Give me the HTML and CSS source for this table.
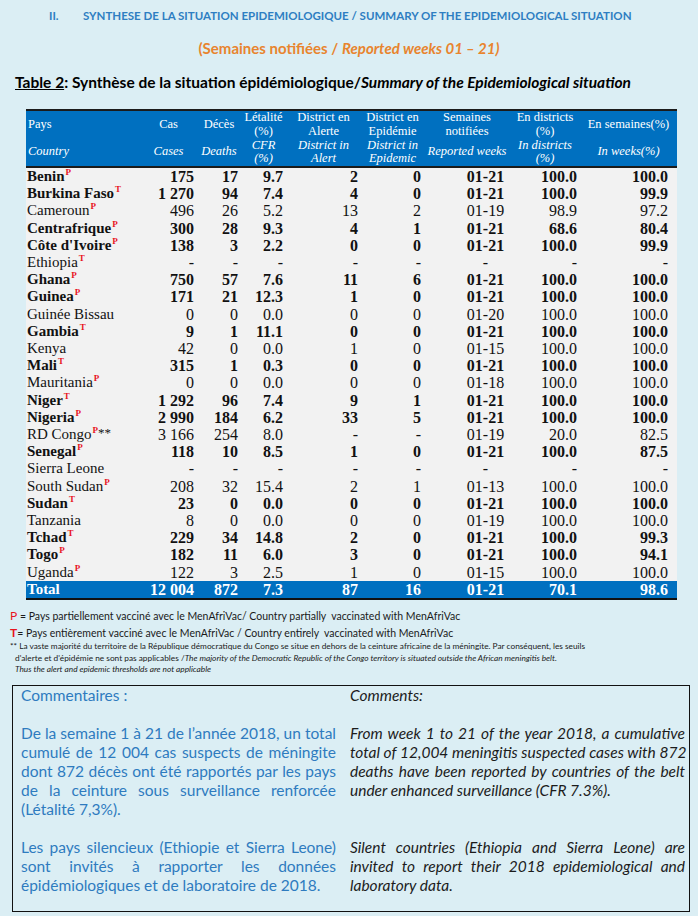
FILE: index.html
```html
<!DOCTYPE html>
<html lang="fr">
<head>
<meta charset="utf-8">
<title>Synthèse de la situation épidémiologique</title>
<link rel="stylesheet" href="styles.css">
</head>
<body>
<div class="page">
  <h2 class="sec"><span class="num">II.</span>SYNTHESE DE LA SITUATION EPIDEMIOLOGIQUE / SUMMARY OF THE EPIDEMIOLOGICAL SITUATION</h2>
  <p class="weeks">(Semaines notifiées / <i>Reported weeks 01 – 21)</i></p>
  <p class="ttl"><u>Table 2</u>: Synthèse de la situation épidémiologique/<i>Summary of the Epidemiological situation</i></p>

  <table class="data">
    <colgroup>
      <col class="w1"><col class="w2"><col class="w3"><col class="w4"><col class="w5"><col class="w6"><col class="w7"><col class="w8"><col class="w9">
    </colgroup>
    <thead>
      <tr class="h1">
        <th class="l">Pays</th><th>Cas</th><th>Décès</th><th>Létalité<br>(%)</th><th>District en<br>Alerte</th><th>District en<br>Epidémie</th><th>Semaines<br>notifiées</th><th>En districts<br>(%)</th><th>En semaines(%)</th>
      </tr>
      <tr class="h2">
        <th class="l">Country</th><th>Cases</th><th>Deaths</th><th>CFR<br>(%)</th><th>District in<br>Alert</th><th>District in<br>Epidemic</th><th>Reported weeks</th><th>In districts<br>(%)</th><th>In weeks(%)</th>
      </tr>
    </thead>
    <tbody>
      <tr class="b"><td class="c">Benin<sup>P</sup></td><td>175</td><td>17</td><td>9.7</td><td>2</td><td>0</td><td class="wk">01-21</td><td>100.0</td><td class="last">100.0</td></tr>
      <tr class="b"><td class="c">Burkina Faso<sup>T</sup></td><td>1 270</td><td>94</td><td>7.4</td><td>4</td><td>0</td><td class="wk">01-21</td><td>100.0</td><td class="last">99.9</td></tr>
      <tr><td class="c">Cameroun<sup>P</sup></td><td>496</td><td>26</td><td>5.2</td><td>13</td><td>2</td><td class="wk">01-19</td><td>98.9</td><td class="last">97.2</td></tr>
      <tr class="b"><td class="c">Centrafrique<sup>P</sup></td><td>300</td><td>28</td><td>9.3</td><td>4</td><td>1</td><td class="wk">01-21</td><td>68.6</td><td class="last">80.4</td></tr>
      <tr class="b"><td class="c">Côte d'Ivoire<sup>P</sup></td><td>138</td><td>3</td><td>2.2</td><td>0</td><td>0</td><td class="wk">01-21</td><td>100.0</td><td class="last">99.9</td></tr>
      <tr><td class="c">Ethiopia<sup>T</sup></td><td>-</td><td>-</td><td>-</td><td>-</td><td>-</td><td class="wk">-</td><td>-</td><td class="last">-</td></tr>
      <tr class="b"><td class="c">Ghana<sup>P</sup></td><td>750</td><td>57</td><td>7.6</td><td>11</td><td>6</td><td class="wk">01-21</td><td>100.0</td><td class="last">100.0</td></tr>
      <tr class="b"><td class="c">Guinea<sup>P</sup></td><td>171</td><td>21</td><td>12.3</td><td>1</td><td>0</td><td class="wk">01-21</td><td>100.0</td><td class="last">100.0</td></tr>
      <tr><td class="c">Guinée Bissau</td><td>0</td><td>0</td><td>0.0</td><td>0</td><td>0</td><td class="wk">01-20</td><td>100.0</td><td class="last">100.0</td></tr>
      <tr class="b"><td class="c">Gambia<sup>T</sup></td><td>9</td><td>1</td><td>11.1</td><td>0</td><td>0</td><td class="wk">01-21</td><td>100.0</td><td class="last">100.0</td></tr>
      <tr><td class="c">Kenya</td><td>42</td><td>0</td><td>0.0</td><td>1</td><td>0</td><td class="wk">01-15</td><td>100.0</td><td class="last">100.0</td></tr>
      <tr class="b"><td class="c">Mali<sup>T</sup></td><td>315</td><td>1</td><td>0.3</td><td>0</td><td>0</td><td class="wk">01-21</td><td>100.0</td><td class="last">100.0</td></tr>
      <tr><td class="c">Mauritania<sup>P</sup></td><td>0</td><td>0</td><td>0.0</td><td>0</td><td>0</td><td class="wk">01-18</td><td>100.0</td><td class="last">100.0</td></tr>
      <tr class="b"><td class="c">Niger<sup>T</sup></td><td>1 292</td><td>96</td><td>7.4</td><td>9</td><td>1</td><td class="wk">01-21</td><td>100.0</td><td class="last">100.0</td></tr>
      <tr class="b"><td class="c">Nigeria<sup>P</sup></td><td>2 990</td><td>184</td><td>6.2</td><td>33</td><td>5</td><td class="wk">01-21</td><td>100.0</td><td class="last">100.0</td></tr>
      <tr><td class="c">RD Congo<sup>P</sup><span class="ast">**</span></td><td>3 166</td><td>254</td><td>8.0</td><td>-</td><td>-</td><td class="wk">01-19</td><td>20.0</td><td class="last">82.5</td></tr>
      <tr class="b"><td class="c">Senegal<sup>P</sup></td><td>118</td><td>10</td><td>8.5</td><td>1</td><td>0</td><td class="wk">01-21</td><td>100.0</td><td class="last">87.5</td></tr>
      <tr><td class="c">Sierra Leone</td><td>-</td><td>-</td><td>-</td><td>-</td><td>-</td><td class="wk">-</td><td>-</td><td class="last">-</td></tr>
      <tr><td class="c">South Sudan<sup>P</sup></td><td>208</td><td>32</td><td>15.4</td><td>2</td><td>1</td><td class="wk">01-13</td><td>100.0</td><td class="last">100.0</td></tr>
      <tr class="b"><td class="c">Sudan<sup>T</sup></td><td>23</td><td>0</td><td>0.0</td><td>0</td><td>0</td><td class="wk">01-21</td><td>100.0</td><td class="last">100.0</td></tr>
      <tr><td class="c">Tanzania</td><td>8</td><td>0</td><td>0.0</td><td>0</td><td>0</td><td class="wk">01-19</td><td>100.0</td><td class="last">100.0</td></tr>
      <tr class="b"><td class="c">Tchad<sup>T</sup></td><td>229</td><td>34</td><td>14.8</td><td>2</td><td>0</td><td class="wk">01-21</td><td>100.0</td><td class="last">99.3</td></tr>
      <tr class="b"><td class="c">Togo<sup>P</sup></td><td>182</td><td>11</td><td>6.0</td><td>3</td><td>0</td><td class="wk">01-21</td><td>100.0</td><td class="last">94.1</td></tr>
      <tr><td class="c">Uganda<sup>P</sup></td><td>122</td><td>3</td><td>2.5</td><td>1</td><td>0</td><td class="wk">01-15</td><td>100.0</td><td class="last">100.0</td></tr>
    </tbody>
    <tfoot>
      <tr class="tot"><td class="c">Total</td><td>12 004</td><td>872</td><td>7.3</td><td>87</td><td>16</td><td class="wk">01-21</td><td>70.1</td><td class="last">98.6</td></tr>
    </tfoot>
  </table>

  <div class="notes">
    <p class="n1"><span class="red">P</span> = Pays partiellement vacciné avec le MenAfriVac/ Country partially&nbsp; vaccinated with MenAfriVac</p>
    <p class="n1"><span class="red b">T</span>= Pays entièrement vacciné avec le MenAfriVac / Country entirely&nbsp; vaccinated with MenAfriVac</p>
    <p class="n2">** La vaste majorité du territoire de la République démocratique du Congo se situe en dehors de la ceinture africaine de la méningite. Par conséquent, les seuils</p>
    <p class="n2 ind">d'alerte et d'épidémie ne sont pas applicables /<i>The majority of the Democratic Republic of the Congo territory is situated outside the African meningitis belt.</i></p>
    <p class="n2 ind"><i>Thus the alert and epidemic thresholds are not applicable</i></p>
  </div>

  <div class="box">
    <p class="fr hd">Commentaires :</p>
    <p class="en hd">Comments:</p>
    <p class="fr par">
      <span class="ln">De la semaine 1 à 21 de l’année 2018, un total</span>
      <span class="ln">cumulé de 12 004 cas suspects de méningite</span>
      <span class="ln">dont 872 décès ont été rapportés par les pays</span>
      <span class="ln">de la ceinture sous surveillance renforcée</span>
      <span class="ln end">(Létalité 7,3%).</span>
    </p>
    <p class="en par">
      <span class="ln">From week 1 to 21 of the year 2018, a cumulative</span>
      <span class="ln">total of 12,004 meningitis suspected cases with 872</span>
      <span class="ln">deaths have been reported by countries of the belt</span>
      <span class="ln end">under enhanced surveillance (CFR 7.3%).</span>
    </p>
    <p class="fr par">
      <span class="ln">Les pays silencieux (Ethiopie et Sierra Leone)</span>
      <span class="ln">sont invités à rapporter les données</span>
      <span class="ln end">épidémiologiques et de laboratoire de 2018.</span>
    </p>
    <p class="en par">
      <span class="ln">Silent countries (Ethiopia and Sierra Leone) are</span>
      <span class="ln">invited to report their 2018 epidemiological and</span>
      <span class="ln end">laboratory data.</span>
    </p>
  </div>
</div>
</body>
</html>
```

FILE: styles.css
```css
html, body {
  margin: 0;
  padding: 0;
  background: #dbeef4;
}
.page {
  width: 698px;
  height: 916px;
  overflow: hidden;
  font-family: Lato, "Liberation Sans", sans-serif;
  color: #111;
}
p, h2 { margin: 0; }

.sec {
  padding: 8px 0 0 49px;
  font-size: 11.5px;
  line-height: 16px;
  font-weight: 700;
  color: #2e7ec2;
  white-space: nowrap;
}
.sec .num {
  display: inline-block;
  width: 34px;
}
.weeks {
  margin-top: 14px;
  text-align: center;
  font-size: 15px;
  line-height: 20px;
  font-weight: 700;
  color: #e8842e;
}
.ttl {
  margin: 14px 0 0 15px;
  font-size: 15.5px;
  line-height: 20px;
  font-weight: 700;
  color: #000;
  white-space: nowrap;
}

.data {
  margin: 17px 0 0 26px;
  width: 651px;
  table-layout: fixed;
  border-collapse: collapse;
  font-family: "Liberation Serif", serif;
}
.w1 { width: 114px; }
.w2 { width: 57px; }
.w3 { width: 44px; }
.w4 { width: 45px; }
.w5 { width: 75px; }
.w6 { width: 63px; }
.w7 { width: 86px; }
.w8 { width: 70px; }
.w9 { width: 97px; }

.data th {
  background: #0070c0;
  color: #fff;
  font-weight: 400;
  font-size: 12.5px;
  line-height: 13.75px;
  text-align: center;
  vertical-align: middle;
  padding: 0;
  white-space: nowrap;
}
.data th.l { text-align: left; padding-left: 2px; }
.data .h1 th { border-top: 2px solid #1b1b1b; height: 27.5px; }
.data .h2 th { font-style: italic; border-bottom: 2px solid #1b1b1b; height: 27.5px; }

.data td {
  background: #f2f2f2;
  font-size: 16px;
  line-height: 17.2px;
  height: 17.2px;
  padding: 0 3px 0 0;
  text-align: right;
  white-space: nowrap;
  color: #111;
}
.data td.c {
  text-align: left;
  padding-left: 1px;
  font-size: 15px;
}
.data td.wk {
  text-align: center;
  padding-left: 40px;
}
.data td.last { padding-right: 9px; }
.data tr.b td { font-weight: 700; }
.data sup {
  font-size: 9px;
  line-height: 0;
  vertical-align: 6px;
  color: #e8141e;
  font-weight: 700;
  margin-left: 1px;
}
.data .ast { font-size: 13px; vertical-align: 2px; line-height: 0; }

.data .tot td {
  background: #0070c0;
  color: #fff;
  font-weight: 700;
  border-bottom: 2px solid #111;
}

.notes {
  margin: 8px 0 0 10px;
  color: #1a1a1a;
}
.n1 {
  font-size: 10.5px;
  line-height: 16.5px;
  white-space: nowrap;
}
.n2 {
  font-size: 8.3px;
  line-height: 11.5px;
  white-space: nowrap;
}
.n2.ind { padding-left: 5px; }
.red { color: #e8141e; font-size: 12px; }
.red.b { font-weight: 700; }

.box {
  margin: 9px 8px 0 12px;
  height: 227px;
  box-sizing: border-box;
  border: 1px solid #111;
  padding: 0 6px 0 8px;
  display: grid;
  grid-template-columns: 315px 335px;
  column-gap: 14px;
  align-items: start;
  font-size: 15.5px;
  line-height: 19px;
}
.fr { color: #2e7bbf; }
.en { color: #1c1c1c; font-style: italic; }
.hd { margin-bottom: 19px; }
.par { margin-bottom: 19px; }
.ln {
  display: block;
  white-space: nowrap;
  text-align: justify;
  text-align-last: justify;
}
.ln.end { text-align: left; text-align-last: left; }
```
